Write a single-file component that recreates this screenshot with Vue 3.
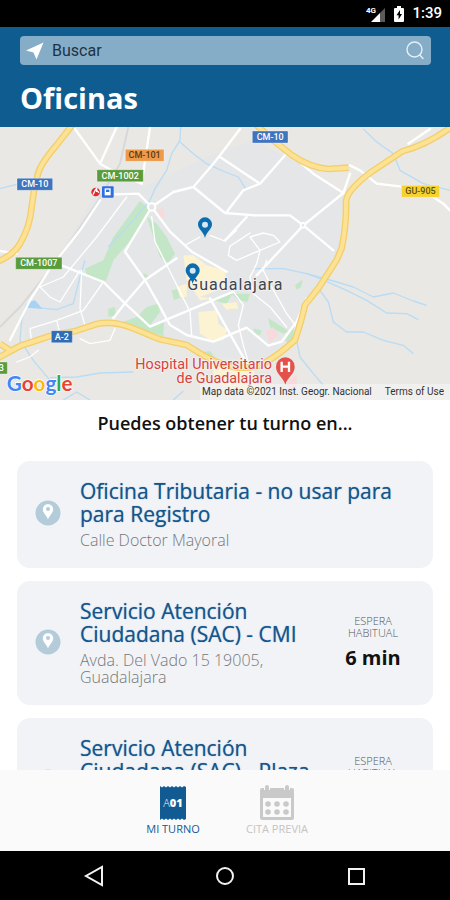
<template>
  <div class="app">

    <!-- ========== STATUS BAR ========== -->
    <div class="status">
      <svg class="status-signal" viewBox="0 0 20 18" aria-hidden="true">
        <path d="M19 3v14h-5V8z" fill="#5a5a5a" />
        <path d="M14 8v9H5z" fill="#fff" />
        <text x="0" y="8" class="status-4g">4G</text>
      </svg>
      <svg class="status-battery" viewBox="0 0 12 18" aria-hidden="true">
        <path d="M4 1h4v2h2q1 0 1 1v12q0 1-1 1H2q-1 0-1-1V4q0-1 1-1h2z" fill="#fff" />
        <path d="M7 5 3.500 10.200H5.600V14.500L9 9H7z" fill="#000" />
      </svg>
      <span class="status-time">1:39</span>
    </div>

    <!-- ========== HEADER ========== -->
    <header class="header">
      <form class="search" @submit.prevent>
        <button type="button" class="search-btn" aria-label="Mi ubicación">
          <svg viewBox="0 0 18 18" class="ico-locate"><path d="M17.500.5 10.500 17.500 7.500 10.500 0 8.500z" fill="#fff" /></svg>
        </button>
        <input v-model="query" type="text" class="search-input" placeholder="Buscar" aria-label="Buscar">
        <button type="submit" class="search-btn" aria-label="Buscar oficina">
          <svg viewBox="0 0 20 20" class="ico-search" fill="none" stroke="#e6f0f6" stroke-width="1.4">
            <circle cx="9.500" cy="8.500" r="7.500" />
            <path d="M14.800 14 18 17.500" stroke-linecap="round" />
          </svg>
        </button>
      </form>
      <h1 class="title">Oficinas</h1>
    </header>

    <!-- ========== MAP ========== -->
    <section class="map" aria-label="Mapa de oficinas">
      <svg class="map-canvas" viewBox="0 0 1350 819" preserveAspectRatio="xMidYMid slice">
        <rect width="1350" height="819" fill="#e9e8e5" />
        <path
          d="M330 120 430 180 620 90 760 40 900 110 1030 200 1020 360 960 470 880 610 800 700 640 690 520 640 340 570 230 610 80 650 60 560 150 420 230 300z"
          fill="#e5e6e7"
        />

        <!-- parks and built-up blocks -->
        <g fill="#c3e6c6">
          <path d="M420 222 452 248 400 330 340 400 318 462 262 450 255 425 310 400 340 330z" />
          <path d="M440 270 470 290 500 330 525 380 505 408 480 390z" />
          <path d="M430 438 445 445 440 460 430 455z" />
          <path d="M325 545 345 540 348 565 325 570z" />
          <path d="M368 585 410 570 440 540 475 530 480 555 450 595 492 580 490 628 440 612z" />
          <path d="M515 490 535 485 545 510 522 520z" />
          <path d="M610 675 630 672 648 695 620 700z" />
          <path d="M640 520 700 495 680 530z" />
          <path d="M695 500 750 500 742 525 715 518z" />
          <path d="M885 475 908 458 903 480 890 488z" />
          <path d="M805 573 865 612 850 620 810 600z" />
          <path d="M760 605 785 610 780 625 765 620z" />
          <path d="M855 640 882 600 880 640 865 650z" />
        </g>
        <g fill="#fbf3d2">
          <path d="M550 385 580 385 620 415 675 430 680 480 600 510 640 515 600 520 560 460z" />
          <path d="M595 555 650 550 655 590 682 610 670 640 640 645 600 620z" />
          <path d="M665 530 710 525 715 545 690 545 680 550z" />
          <path d="M530 480 560 470 560 510 540 510z" />
          <path d="M640 720 760 725 780 800 700 790 640 760z" />
        </g>
        <g fill="#f8d9dc">
          <path d="M470 246 490 245 495 270 475 272z" />
          <path d="M798 615 820 600 835 625 810 648z" />
          <path d="M860 770 890 740 890 780 870 790z" />
        </g>

        <!-- water -->
        <g class="river">
          <path d="M542 0 540 40 515 80 500 130 465 185 450 220 390 290 325 360" />
          <path d="M540 45 580 80 620 110 675 135 715 150 740 190" />
          <path d="M1090 6 1130 45 1180 80 1200 130 1270 170 1350 190" />
          <path d="M0 185 50 172" />
          <path d="M255 400 240 450 220 530 170 548 110 542" />
          <path d="M80 530 65 580 60 640 100 700 150 760" />
          <path d="M150 752 230 750 300 738 400 735" />
          <path d="M190 819 230 795 270 819" />
          <path d="M520 819 550 792" />
          <path d="M760 425 850 425 920 440 1000 462 1060 480 1120 510 1180 498 1240 522 1280 535" />
          <path d="M920 440 960 455 1040 490 1100 520 1160 558 1220 560 1255 578" />
          <path d="M960 490 985 525 1000 585 1040 615 1090 615 1150 640 1210 655 1240 680" />
          <path d="M890 640 900 690 940 740 970 775" />
        </g>
        <path d="M78 542 88 525 105 520 127 545z" fill="#a8d2f5" />

        <!-- railway -->
        <path d="M385 0 360 110 295 220 180 390 60 540 0 600" class="rail" />

        <!-- local streets -->
        <g class="street thin">
          <path d="M120 480 150 510 180 525 240 430M245 430 240 545 255 595M90 605 170 580 250 550 310 465M90 605 95 650M170 580 180 620" />
          <path d="M240 635 270 650 330 640 345 605M50 705 90 690 115 670" />
          <path d="M380 210 290 330 190 450 120 480" />
          <path d="M455 269 465 344 500 414 540 494 570 554 575 624" />
          <path d="M700 494 730 534 715 594 730 654 750 724" />
          <path d="M560 352 600 330M630 325 675 342 710 310" />
          <path d="M750 318 725 335 690 357 685 385 710 400 780 370 840 345 820 325 790 318 750 330M750 330 780 370 770 410" />
          <path d="M800 400 790 430 815 480 860 560 890 600M770 410 750 450 760 500M760 500 810 540 860 600" />
        </g>
        <g class="street">
          <path d="M225 6 300 110 345 135 425 170 450 0M350 0 300 110" />
          <path d="M345 202 415 200 455 240 375 374 435 459 480 539 510 594 560 624 640 644 740 602 805 656 845 644 890 584 920 514" />
          <path d="M300 220 240 310 150 425 90 520 30 640" />
          <path d="M455 240 510 314 575 374 680 434" />
          <path d="M455 240 520 195 580 180 640 110 675 65 720 6" />
          <path d="M580 180 675 258 765 265" />
          <path d="M185 415 310 465 375 529 450 599 700 494M340 574 375 529 435 459 530 394" />
          <path d="M630 514 720 674 750 724" />
          <path d="M660 90 780 170 855 85M780 170 730 190 680 255M765 265 870 265 910 295 1030 198 1050 140M740 270 675 340" />
          <path d="M820 40 940 140 1030 198M910 295 770 445M910 295 1000 370" />
          <path d="M1050 115 1080 130 1130 170 1200 178 1300 210 1330 230 1350 250M1225 50 1290 6" />
          <path d="M0 372 50 380" />
        </g>
        <circle cx="455" cy="240" r="11" class="roundabout" />
        <circle cx="909" cy="295" r="7" class="roundabout" />

        <!-- motorways -->
        <g class="road-edge">
          <path v-for="d in motorways" :key="d" :d="d" />
        </g>
        <g class="road-fill">
          <path v-for="d in motorways" :key="d" :d="d" />
        </g>

        <!-- road shields -->
        <g v-for="s in shields" :key="s.id">
          <rect :x="s.x" :y="s.y" :width="s.w" height="36" rx="2" :fill="s.bg" stroke="#fff" stroke-opacity=".5" stroke-width="2" />
          <text :x="s.x + s.w / 2" :y="s.y + 27" :fill="s.fg" class="shield">{{ s.label }}</text>
        </g>

        <!-- station -->
        <circle cx="287" cy="195" r="13" fill="#e02b2b" />
        <path d="M279 203 287 187 297 197M290 195v-12" stroke="#fff" stroke-width="4" fill="none" />
        <rect x="306" y="178" width="35" height="34" rx="3" fill="#2f6fe0" />
        <path d="M314 184h18v21h-18z" fill="#fff" />
        <path d="M318 188h10v7h-10z" fill="#2f6fe0" />

        <!-- place names -->
        <text x="562" y="489" class="city">Guadalajara</text>
        <text x="816" y="725" class="poi">Hospital Universitario</text>
        <text x="816" y="769" class="poi">de Guadalajara</text>
        <path d="M856 773C850 750 828 742 828 719a28 28 0 0 1 56 0c0 23-22 31-28 54z" fill="#e5504a" />
        <path d="M845 704v31M867 704v31M845 719h22" stroke="#fff" stroke-width="7" />

        <!-- office pins -->
        <g v-for="p in pins" :key="p.x" :transform="`translate(${p.x} ${p.y})`">
          <path d="M0 60C-5 40-21 34-21 19a21 21 0 0 1 42 0C21 34 5 40 0 60z" fill="#0b6cae" />
          <circle cy="20" r="9" fill="#d5e8f3" />
        </g>

        <text x="20" y="792" class="google">
          <tspan fill="#4285f4">G</tspan><tspan fill="#ea4335">o</tspan><tspan fill="#fbbc05">o</tspan><tspan fill="#4285f4">g</tspan><tspan fill="#34a853">l</tspan><tspan fill="#ea4335">e</tspan>
        </text>
      </svg>
      <div class="map-legal">
        <span>Map data ©2021 Inst. Geogr. Nacional</span>
        <a href="#">Terms of Use</a>
      </div>
    </section>

    <!-- ========== OFFICES ========== -->
    <main class="offices">
      <h2 class="offices-title">Puedes obtener tu turno en...</h2>
      <a v-for="o in offices" :key="o.id" href="#" class="card">
        <svg class="card-pin" viewBox="0 0 26 26" aria-hidden="true">
          <circle cx="13" cy="13" r="12.500" fill="#b4cbda" />
          <path d="M13 19.500C12 16 7.800 13 7.800 9.200a5.200 5.200 0 0 1 10.400 0C18.200 13 14 16 13 19.500z" fill="#fff" />
          <circle cx="13" cy="9" r="2" fill="#b4cbda" />
        </svg>
        <div class="card-text">
          <h3 class="card-name">{{ o.name }}</h3>
          <p class="card-address">{{ o.address }}</p>
        </div>
        <div v-if="o.wait" class="card-wait">
          <span class="wait-label">ESPERA HABITUAL</span>
          <strong class="wait-value">{{ o.wait }}</strong>
        </div>
      </a>
    </main>

    <!-- ========== TABS ========== -->
    <nav class="tabs">
      <button type="button" class="tab" :class="{ active: tab === 'turno' }" @click="tab = 'turno'">
        <svg class="tab-icon" viewBox="0 0 36 36" aria-hidden="true">
          <path
            d="M5 1l2 1.500L9 1l2 1.500L13 1l2 1.500L17 1l2 1.500L21 1l2 1.500L25 1l2 1.500L29 1l2 1V34l-2 1-2-1.500L25 35l-2-1.500L21 35l-2-1.500L17 35l-2-1.500L13 35l-2-1.500L9 35l-2-1.500L5 35z"
            fill="currentColor"
          />
          <text x="18" y="22" class="ticket">A<tspan class="ticket-num">01</tspan></text>
        </svg>
        <span>MI TURNO</span>
      </button>
      <button type="button" class="tab" :class="{ active: tab === 'cita' }" @click="tab = 'cita'">
        <svg class="tab-icon" viewBox="0 0 36 36" aria-hidden="true">
          <path d="M3 3h30q2 0 2 2v28q0 2-2 2H3q-2 0-2-2V5q0-2 2-2z" fill="#c9c9c9" />
          <path d="M4 13h28v19H4z" fill="#fafafa" />
          <path d="M8 0v5M28 0v5" stroke="#fafafa" stroke-width="6" />
          <path d="M8 2v3M28 2v3" stroke="#c9c9c9" stroke-width="4" stroke-linecap="round" />
          <g fill="#c9c9c9">
            <circle v-for="n in 6" :key="n" :cx="9 + ((n - 1) % 3) * 9" :cy="n > 3 ? 27 : 19" r="2.800" />
          </g>
        </svg>
        <span>CITA PREVIA</span>
      </button>
    </nav>

    <!-- ========== SYSTEM NAVIGATION ========== -->
    <div class="sysnav">
      <button type="button" aria-label="Atrás">
        <svg viewBox="0 0 22 22"><path d="M19 2v18L3 11z" /></svg>
      </button>
      <button type="button" aria-label="Inicio">
        <svg viewBox="0 0 22 22"><circle cx="11" cy="11" r="8" /></svg>
      </button>
      <button type="button" aria-label="Recientes">
        <svg viewBox="0 0 22 22"><path d="M4 4h15v15H4z" /></svg>
      </button>
    </div>

  </div>
</template>

<script setup>
import { ref } from 'vue'

const query = ref('')
const tab = ref('turno')

const offices = [
  { id: 1, name: 'Oficina Tributaria - no usar para para Registro', address: 'Calle Doctor Mayoral' },
  { id: 2, name: 'Servicio Atención Ciudadana (SAC) - CMI', address: 'Avda. Del Vado 15 19005, Guadalajara', wait: '6 min' },
  { id: 3, name: 'Servicio Atención Ciudadana (SAC) - Plaza Mayor', address: 'Plaza Mayor 19001, Guadalajara', wait: '6 min' },
]

const motorways = [
  'M220-10 170 54Q122 110 114 140Q100 190 95 240Q90 300 60 350Q40 385-10 405',
  'M-10 695 60 657 150 627 230 611 290 591Q340 580 400 604L480 637 560 654 600 679Q700 740 780 715Q830 690 885 639Q905 580 915 534L955 484 1010 399 1025 364Q1040 290 1038 224Q1040 190 1115 134L1205 74Q1290 50 1360-5',
  'M765-10 825 44 875 84Q930 122 985 126L1045 122',
  'M0 650 30 670',
]

const shields = [
  { id: 1, label: 'CM-10', x: 51, y: 154, w: 107, bg: '#3f74bf', fg: '#fff' },
  { id: 2, label: 'CM-10', x: 757, y: 12, w: 107, bg: '#3f74bf', fg: '#fff' },
  { id: 3, label: 'CM-101', x: 376, y: 67, w: 116, bg: '#ee9a48', fg: '#5b3a1a' },
  { id: 4, label: 'CM-1002', x: 291, y: 128, w: 139, bg: '#5a9c3c', fg: '#fff' },
  { id: 5, label: 'CM-1007', x: 47, y: 391, w: 139, bg: '#5a9c3c', fg: '#fff' },
  { id: 6, label: 'GU-905', x: 1204, y: 175, w: 115, bg: '#f6d22f', fg: '#5d5014' },
  { id: 7, label: 'A-2', x: 154, y: 611, w: 63, bg: '#2f6db5', fg: '#fff' },
  { id: 8, label: '3', x: -14, y: 705, w: 36, bg: '#5a9c3c', fg: '#fff' },
]

const pins = [
  { x: 615, y: 273 },
  { x: 578, y: 411 },
]
</script>

<style>
body {
  margin: 0;
  background: #fff;
}
</style>

<style scoped>
.app {
  display: flex;
  flex-direction: column;
  height: 100vh;
  font-family: 'Open Sans', 'Noto Sans', sans-serif;
  background: #fff;
  color: #111;
}

button {
  border: 0;
  padding: 0;
  background: none;
  font: inherit;
  cursor: pointer;
}

svg { display: block; }

/* ─── Status bar ────────────────────────────────────── */
.status {
  flex-shrink: 0;
  display: flex;
  align-items: center;
  justify-content: flex-end;
  gap: 7px;
  height: 27px;
  padding-right: 8px;
  background: #000;
  color: #fff;
  font-family: Roboto, sans-serif;
}

.status-signal { width: 20px; height: 18px; }
.status-battery { width: 12px; height: 18px; }
.status-4g { font-size: 8px; font-weight: 700; fill: #fff; }
.status-time { font-size: 15px; font-weight: 500; line-height: 27px; }

/* ─── Header ────────────────────────────────────────── */
.header {
  flex-shrink: 0;
  padding: 9px 19px 10px 20px;
  background: #0e5c90;
}

.search {
  display: flex;
  align-items: center;
  height: 29px;
  padding: 0 6px;
  border-radius: 4px;
  background: #86adc8;
}

.search-input {
  flex: 1;
  min-width: 0;
  padding: 0 8px;
  border: 0;
  outline: 0;
  background: none;
  font: 16px/29px Roboto, sans-serif;
  color: #1c3346;
}

.search-input::placeholder { color: #1c3346; opacity: 1; }

.ico-locate { width: 18px; height: 18px; }
.ico-search { width: 20px; height: 20px; }

.title {
  margin: 13px 0 0;
  font-size: 29px;
  line-height: 39px;
  font-weight: 700;
  color: #fff;
}

/* ─── Map ───────────────────────────────────────────── */
.map {
  position: relative;
  flex-shrink: 0;
}

.map-canvas { width: 100%; height: 273px; }

.river path { fill: none; stroke: #b9dcf4; stroke-width: 4; stroke-linejoin: round; }
.rail { fill: none; stroke: #d8d8da; stroke-width: 6; }
.street path { fill: none; stroke: #fff; stroke-width: 7; stroke-linejoin: round; stroke-linecap: round; }
.street.thin path { stroke-width: 4; }
.roundabout { fill: #e5e6e7; stroke: #fff; stroke-width: 6; }
.road-edge path { fill: none; stroke: #f2cf6c; stroke-width: 20; stroke-linejoin: round; }
.road-fill path { fill: none; stroke: #fde293; stroke-width: 12; stroke-linejoin: round; }

.shield {
  font: 500 27px Roboto, sans-serif;
  text-anchor: middle;
}

.city {
  font: 400 48px Roboto, sans-serif;
  letter-spacing: 3px;
  fill: #3f454d;
  stroke: #f3f3f3;
  stroke-width: 5;
  paint-order: stroke;
}

.poi {
  font: 400 43px Roboto, sans-serif;
  text-anchor: end;
  fill: #d8413c;
  stroke: #f3f3f3;
  stroke-width: 5;
  paint-order: stroke;
}

.google {
  font: 700 62px Lato, sans-serif;
  stroke: #fff;
  stroke-width: 4;
  paint-order: stroke;
}

.map-legal {
  position: absolute;
  right: 0;
  bottom: 0;
  display: flex;
  gap: 13px;
  padding: 0 6px 0 2px;
  background: rgba(245, 245, 245, 0.6);
  font: 10px/16px Roboto, sans-serif;
  color: #333;
}

.map-legal a { color: inherit; text-decoration: none; }

/* ─── Offices ───────────────────────────────────────── */
.offices {
  flex: 1;
  min-height: 0;
  overflow: hidden;
  padding: 11px 17px 0;
}

.offices-title {
  margin: 0 0 26px;
  font-size: 18px;
  line-height: 24px;
  font-weight: 600;
  text-align: center;
}

.card {
  display: flex;
  align-items: center;
  margin-bottom: 13px;
  padding: 19px 7px 19px 18px;
  border-radius: 13px;
  background: #f1f3f7;
  text-decoration: none;
}

.card-pin {
  flex-shrink: 0;
  width: 26px;
  height: 26px;
  margin: 0 19px 3px 0;
}

.card-text { flex: 1; min-width: 0; }

.card-name {
  margin: 0 0 6px;
  font-size: 21px;
  line-height: 23px;
  font-weight: 500;
  color: #14558c;
  text-shadow: 0 0 1px rgba(20, 85, 140, 0.6);
}

.card-address {
  margin: 0;
  font-size: 16px;
  line-height: 17px;
  font-weight: 300;
  color: #777;
}

.card-wait {
  flex-shrink: 0;
  display: flex;
  flex-direction: column;
  align-items: center;
  width: 106px;
}

.wait-label {
  width: 60px;
  font-size: 11px;
  line-height: 12px;
  font-weight: 300;
  text-align: center;
  color: #555;
}

.wait-value {
  margin-top: 6px;
  font-size: 20px;
  line-height: 26px;
  font-weight: 700;
  color: #111;
}

/* ─── Tabs ──────────────────────────────────────────── */
.tabs {
  flex-shrink: 0;
  display: flex;
  justify-content: center;
  height: 81px;
  background: #fafafa;
}

.tab {
  display: flex;
  flex-direction: column;
  align-items: center;
  width: 104px;
  padding-top: 15px;
  font-size: 11px;
  line-height: 15px;
  color: #c4c4c4;
}

.tab.active { color: #125a92; }
.tab-icon { width: 36px; height: 36px; }

.ticket {
  font-size: 11px;
  font-weight: 300;
  fill: #fff;
  text-anchor: middle;
}

.ticket-num { font-weight: 800; }

/* ─── System navigation ─────────────────────────────── */
.sysnav {
  flex-shrink: 0;
  display: flex;
  justify-content: center;
  height: 49px;
  background: #000;
}

.sysnav button {
  display: flex;
  align-items: center;
  justify-content: center;
  width: 131px;
}

.sysnav svg {
  width: 22px;
  height: 22px;
  fill: none;
  stroke: #f2f2f2;
  stroke-width: 2;
}
</style>
